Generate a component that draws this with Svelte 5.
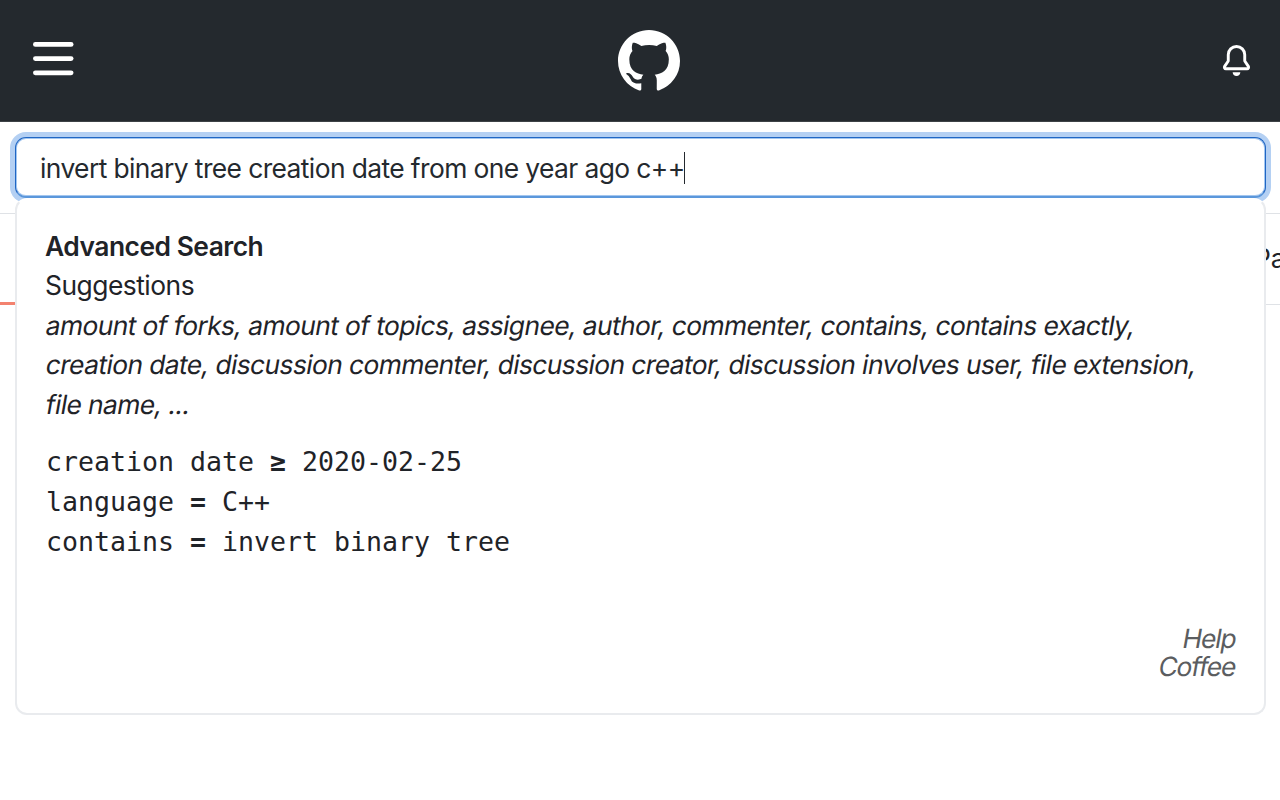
<script>
    let query = 'invert binary tree creation date from one year ago c++';

    let suggestions = [
        'amount of forks, amount of topics, assignee, author, commenter, contains, contains exactly,',
        'creation date, discussion commenter, discussion creator, discussion involves user, file extension,',
        'file name, ...'
    ];

    let filters = [
        { name: 'creation date', op: '≥', value: '2020-02-25' },
        { name: 'language', op: '=', value: 'C++' },
        { name: 'contains', op: '=', value: 'invert binary tree' }
    ];
</script>

<style>
    :global(body) {
        background: #fff;
        overflow: hidden;
    }

    .page {
        height: 800px;
        overflow: hidden;
        color: #1f2328;
        font-family: Inter, "Liberation Sans", sans-serif;
        font-size: 26.4px;
    }

    header {
        box-sizing: border-box;
        height: 122px;
        padding: 0 28.5px 0 33px;
        display: grid;
        grid-template-columns: 1fr auto 1fr;
        align-items: center;
        border-bottom: 1px solid #3d4246;
        background: #24292e;
    }

    svg {
        display: block;
        fill: #fff;
    }

    .menu {
        margin-bottom: 4px;
    }

    .logo {
        margin: 0 1px 0 14px;
    }

    .bell {
        justify-self: end;
    }

    .search {
        position: relative;
        box-sizing: border-box;
        height: 92px;
        padding: 15px 14px 0 15px;
        border-bottom: 1px solid #dfe2e6;
    }

    .field {
        box-sizing: border-box;
        height: 61px;
        padding: 2px 24px 0;
        display: flex;
        align-items: center;
        border: 1px solid #1f66c4;
        border-bottom: 2px solid #5b97db;
        border-radius: 11px;
        box-shadow: 0 0 0 5px #b4d0f3, inset 0 0 0 1px #a3c6ef;
        background: #fff;
        color: #24292e;
        white-space: nowrap;
    }

    .caret {
        width: 1.5px;
        height: 32px;
        margin-left: -1px;
        background: #24292e;
    }

    .query {
        letter-spacing: -0.6px;
    }

    .dropdown {
        position: absolute;
        z-index: 1;
        top: 76px;
        left: 15px;
        right: 14px;
        box-sizing: border-box;
        height: 517px;
        padding: 26.5px 29px 33px 28px;
        display: flex;
        flex-direction: column;
        border: 2px solid #e9ebee;
        border-top-color: #fff;
        border-radius: 12px;
        background: #fff;
        line-height: 39.6px;
        white-space: nowrap;
    }

    .title {
        font-weight: 600;
        letter-spacing: -0.5px;
    }

    .subtitle {
        letter-spacing: -0.5px;
    }

    /* slanted upright letters, so that "a" and "f" keep their roman shapes */
    .slanted {
        transform: skewX(-10deg);
        transform-origin: 0 66%;
        letter-spacing: -0.6px;
    }

    .filters {
        margin: 18px 0 0 1px;
        font-family: "DejaVu Sans Mono", monospace;
        font-size: 26.58px;
    }

    .links {
        margin-top: auto;
        display: flex;
        flex-direction: column;
        align-items: flex-end;
        color: #5b5d60;
        line-height: 27.5px;
    }

    .links .slanted {
        letter-spacing: -1.1px;
    }

    nav {
        box-sizing: border-box;
        height: 91px;
        display: flex;
        justify-content: space-between;
        border-bottom: 1px solid #dfe2e6;
    }

    .tab {
        height: 88px;
        line-height: 89px;
    }

    .active {
        width: 80px;
        border-bottom: 3px solid #f3826f;
    }

    .cut {
        width: 26px;
        overflow: hidden;
        white-space: nowrap;
    }
</style>

<div class="page">
    <header>
        <svg class="menu" width="41" height="34" viewBox="0 0 41 34">
            <rect y="0" width="40.5" height="4.8" rx="2.4" />
            <rect y="14.2" width="40.5" height="4.8" rx="2.4" />
            <rect y="28.4" width="40.5" height="4.8" rx="2.4" />
        </svg>
        <svg class="logo" width="62" height="62" viewBox="0 0 16 16">
            <path fill-rule="evenodd" d="M8 0C3.58 0 0 3.58 0 8c0 3.54 2.29 6.53 5.47 7.59.4.07.55-.17.55-.38 0-.19-.01-.82-.01-1.49-2.01.37-2.53-.49-2.69-.94-.09-.23-.48-.94-.82-1.13-.28-.15-.68-.52-.01-.53.63-.01 1.08.58 1.23.82.72 1.21 1.87.87 2.33.66.07-.52.28-.87.51-1.07-1.78-.2-3.64-.89-3.64-3.95 0-.87.31-1.59.82-2.15-.08-.2-.36-1.02.08-2.12 0 0 .67-.21 2.2.82.64-.18 1.32-.27 2-.27.68 0 1.36.09 2 .27 1.53-1.04 2.2-.82 2.2-.82.44 1.1.16 1.92.08 2.12.51.56.82 1.27.82 2.15 0 3.07-1.87 3.75-3.65 3.95.29.25.54.73.54 1.48 0 1.07-.01 1.93-.01 2.2 0 .21.15.46.55.38A8.013 8.013 0 0016 8c0-4.42-3.58-8-8-8z" />
        </svg>
        <svg class="bell" width="31" height="31" viewBox="0 0 16 16">
            <path d="M8 16a2 2 0 001.985-1.75c.017-.137-.097-.25-.235-.25h-3.5c-.138 0-.252.113-.235.25A2 2 0 008 16z" />
            <path fill-rule="evenodd" d="M8 1.5A3.5 3.5 0 004.5 5v2.947c0 .346-.102.683-.294.97l-1.703 2.556a.018.018 0 00-.003.01l.001.006c0 .002.002.004.004.006a.017.017 0 00.006.004l.007.001h10.964l.007-.001a.016.016 0 00.006-.004.016.016 0 00.004-.006l.001-.007a.017.017 0 00-.003-.01l-1.703-2.554a1.75 1.75 0 01-.294-.97V5A3.5 3.5 0 008 1.5zM3 5a5 5 0 0110 0v2.947c0 .05.015.098.042.139l1.703 2.555A1.518 1.518 0 0113.482 13H2.518a1.518 1.518 0 01-1.263-2.36l1.703-2.554A.25.25 0 003 7.947V5z" />
        </svg>
    </header>

    <div class="search">
        <div class="field">
            <span class="query">{query}</span>
            <span class="caret"></span>
        </div>

        <div class="dropdown">
            <div class="title">Advanced Search</div>
            <div class="subtitle">Suggestions</div>
            <div class="suggestions">
                {#each suggestions as line}
                    <div class="slanted">{line}</div>
                {/each}
            </div>
            <div class="filters">
                {#each filters as filter}
                    <div>{filter.name} <b>{filter.op}</b> {filter.value}</div>
                {/each}
            </div>
            <div class="links">
                <span class="slanted">Help</span>
                <span class="slanted">Coffee</span>
            </div>
        </div>
    </div>

    <nav>
        <div class="tab active"></div>
        <div class="tab cut">Pages</div>
    </nav>
</div>
